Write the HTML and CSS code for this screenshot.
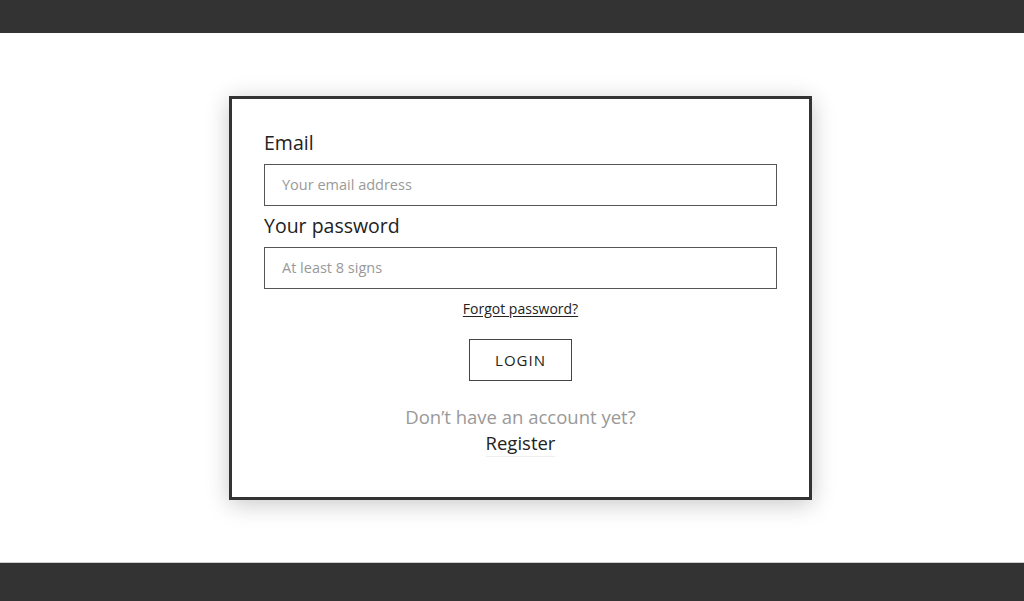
FILE: index.html
```html
<!DOCTYPE html>
<html lang="en">
<head>
<meta charset="utf-8">
<title>Login</title>
<link rel="stylesheet" href="styles.css">
</head>
<body>
<header class="topbar"></header>
<main class="main">
  <form class="card">
    <label class="label" for="email">Email</label>
    <input class="input" id="email" type="email" placeholder="Your email address">
    <label class="label label-pw" for="pw">Your password</label>
    <input class="input" id="pw" type="password" placeholder="At least 8 signs">
    <a class="forgot" href="#">Forgot password?</a>
    <button class="btn" type="button">LOGIN</button>
    <p class="noacc">Don’t have an account yet?</p>
    <a class="register" href="#">Register</a>
  </form>
</main>
<footer class="footbar"></footer>
</body>
</html>
```
FILE: styles.css
```css
* { box-sizing: border-box; }
html, body { margin: 0; height: 100%; }
body {
  font-family: "Open Sans", "Liberation Sans", sans-serif;
  color: #333;
  background: #fff;
  display: flex;
  flex-direction: column;
}
.topbar { height: 33px; background: #333; flex: none; }
.footbar { height: 39px; background: #333; flex: none; border-top: 1px solid #ccc; }
.main {
  flex: 1;
  display: flex;
  align-items: center;
  justify-content: center;
  padding-left: 17px;
}
.card {
  width: 583px;
  border: 3px solid #333;
  background: #fff;
  box-shadow: 0 4px 22px rgba(0,0,0,0.22);
  padding: 32px 32px 40px 32px;
  display: flex;
  flex-direction: column;
  align-items: center;
}
.label {
  align-self: stretch;
  font-size: 19.5px;
  line-height: 24px;
  color: #222;
  margin-bottom: 9px;
}
.label-pw { margin-top: 8px; }
.input {
  align-self: stretch;
  height: 42px;
  border: 1px solid #555;
  padding: 0 17px;
  font-family: inherit;
  font-size: 14.5px;
  color: #333;
  outline: none;
}
.input::placeholder { color: #999; }
.forgot {
  margin-top: 11px;
  font-size: 14px;
  line-height: 18px;
  color: #222;
  text-decoration: underline;
  text-underline-offset: 2px;
}
.btn {
  margin-top: 21px;
  width: 103px;
  height: 42px;
  border: 1px solid #444;
  background: #fff;
  font-family: inherit;
  font-size: 15px;
  letter-spacing: 1px;
  color: #222;
}
.noacc {
  margin: 24px 0 0;
  font-size: 18.5px;
  line-height: 24px;
  color: #999;
}
.register {
  margin-top: 2px;
  font-size: 18.5px;
  line-height: 24px;
  color: #222;
  text-decoration: none;
  border-bottom: 1px solid #eee;
  padding-bottom: 1px;
}
```
